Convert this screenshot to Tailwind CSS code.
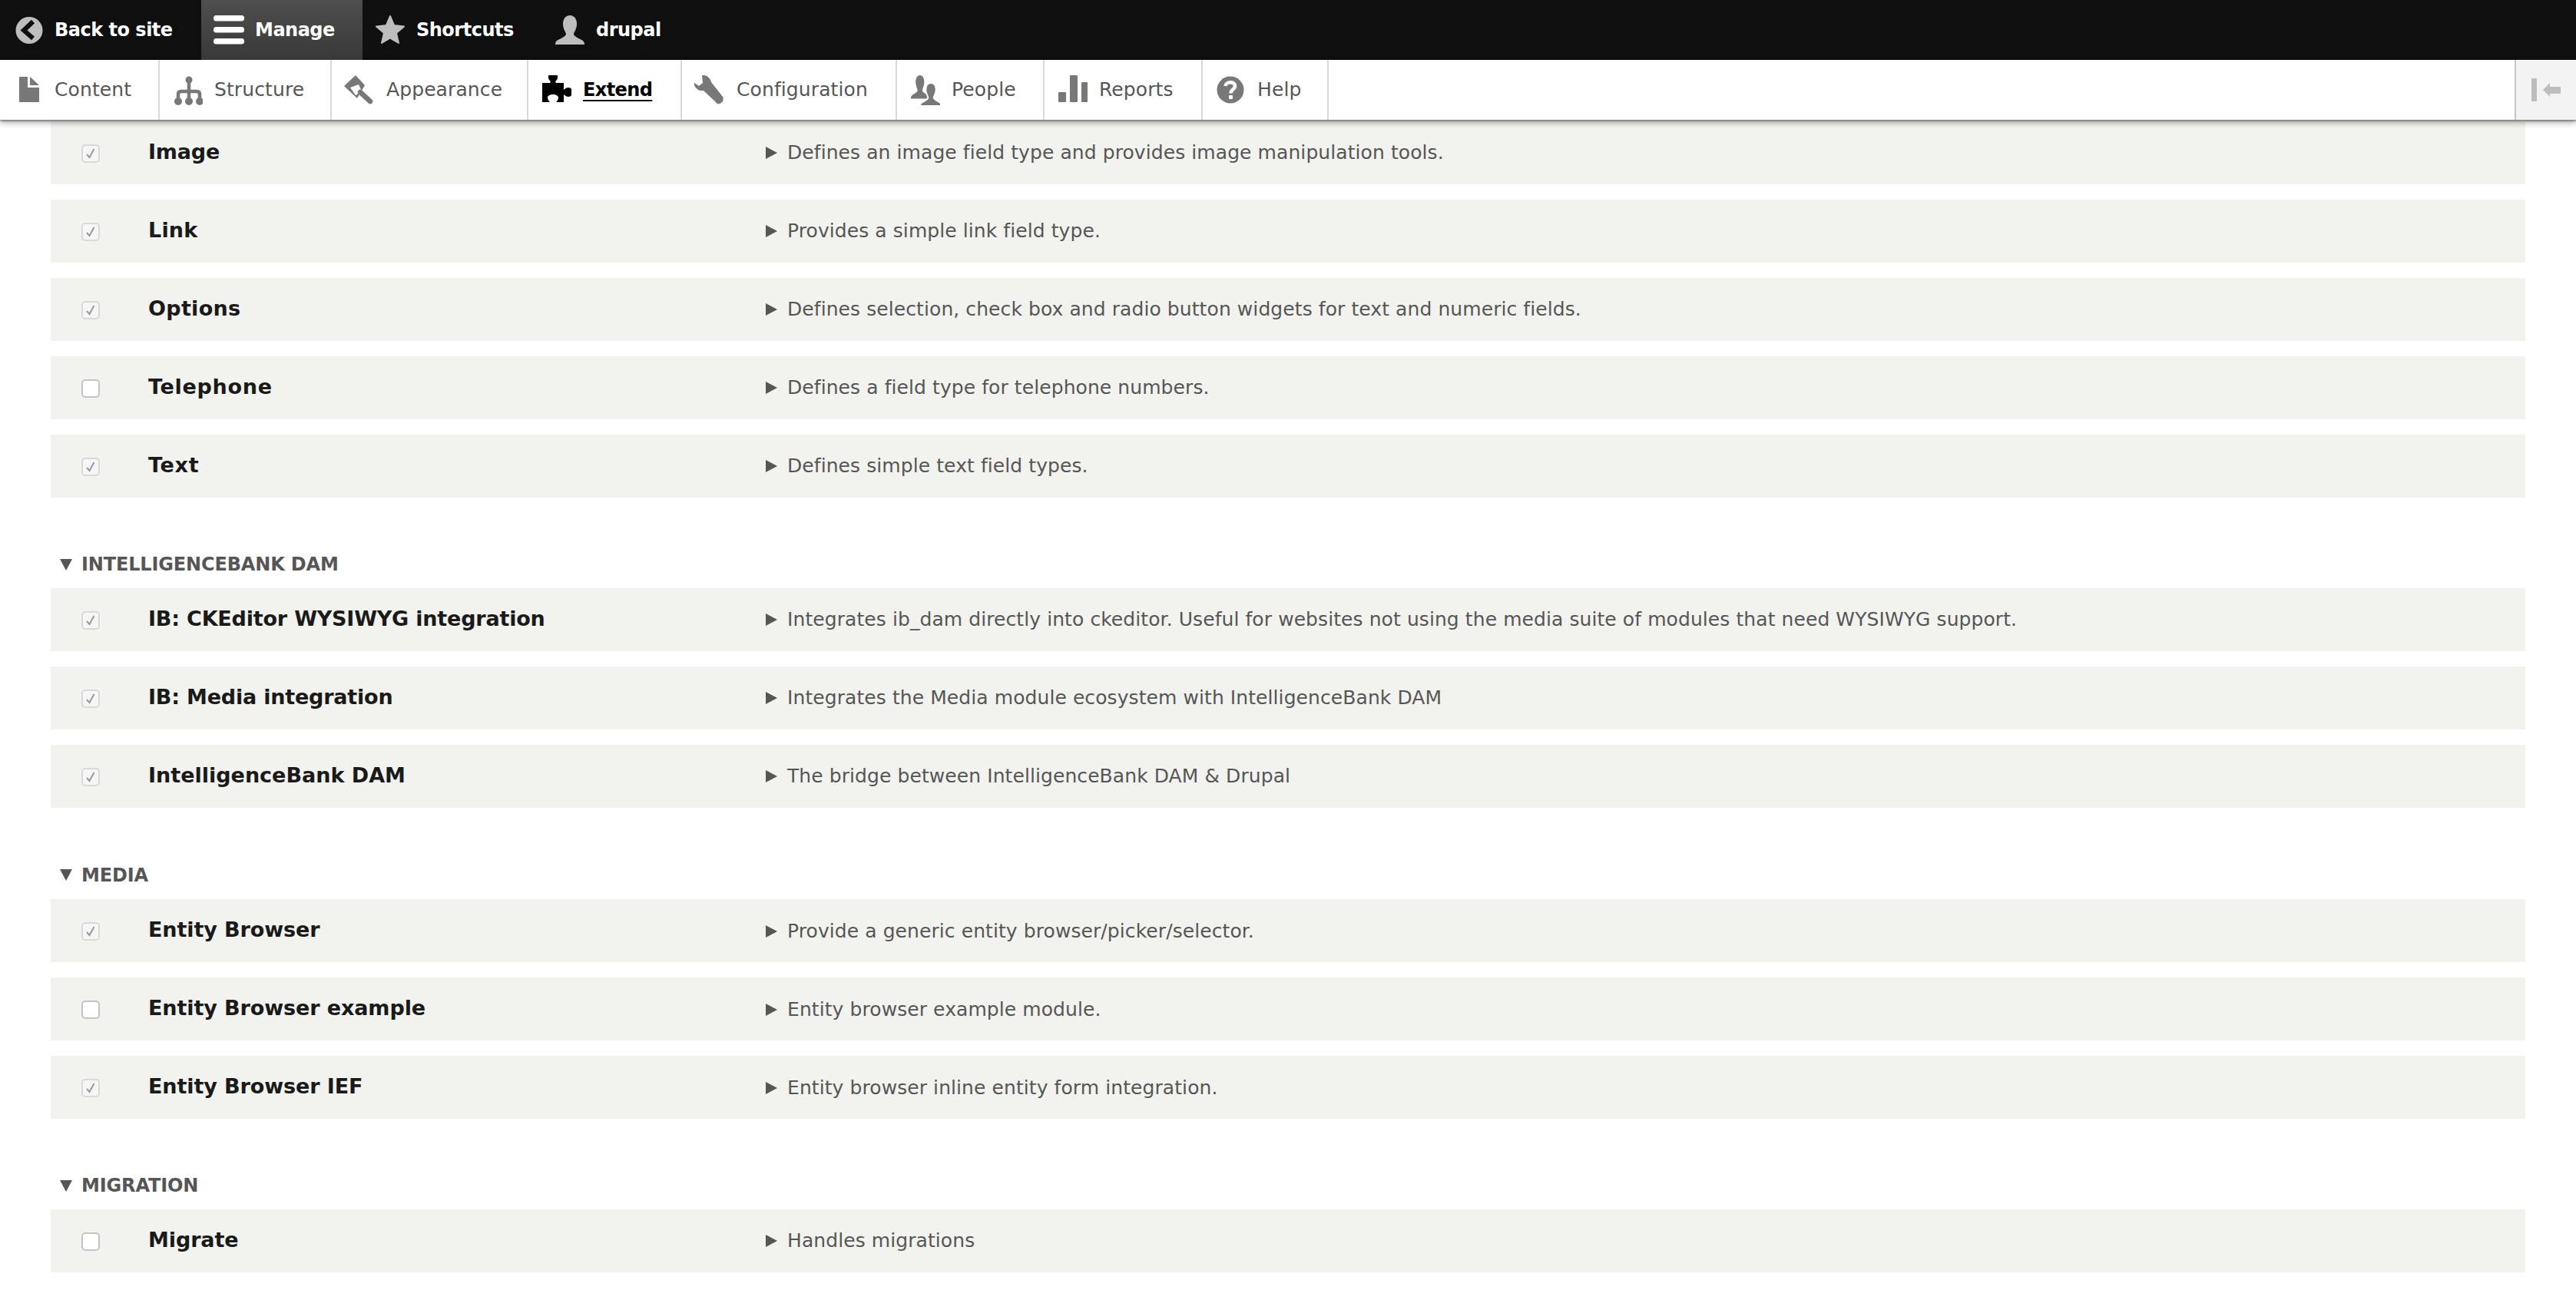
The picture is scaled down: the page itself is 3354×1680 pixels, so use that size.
<!DOCTYPE html>
<html><head><meta charset="utf-8"><script src="https://cdn.jsdelivr.net/npm/@tailwindcss/browser@4"></script></head>
<body class="bg-white w-[3354px] h-[1680px] overflow-hidden font-['DejaVu_Sans',sans-serif]">
<header class="relative z-10">
  <div class="h-[78px] bg-[#0f0f0f] flex text-white font-bold text-[24px] tracking-[-0.5px]">
    <a class="w-[262px] pl-4 flex items-center"><svg class="w-10 h-10 mr-[15px] shrink-0" viewBox="0 0 40 40"><circle cx="22" cy="20.5" r="17.5" fill="#bdbdbd"/><path d="M27 9 L15 20.5 L27 31" fill="none" stroke="#0f0f0f" stroke-width="6"/></svg>Back to site</a>
    <a class="w-[210px] pl-4 flex items-center bg-gradient-to-b from-[#4f4f4f] to-[#383838]"><svg class="w-10 h-10 mr-[14px] shrink-0" viewBox="0 0 40 40"><rect y="1" width="40" height="7.500" rx="3.500" fill="#fff"/><rect y="16" width="40" height="7.500" rx="3.500" fill="#fff"/><rect y="31" width="40" height="7.500" rx="3.500" fill="#fff"/></svg>Manage</a>
    <a class="w-[234px] pl-4 flex items-center"><svg class="w-10 h-10 mr-[14px] shrink-0" viewBox="0 0 40 40"><polygon points="20,2 25,14 38,15.500 28,24 31,37 20,30.500 9,37 12,24 2,15.500 15,14" fill="#bdbdbd" stroke="#bdbdbd" stroke-width="2" stroke-linejoin="round"/></svg>Shortcuts</a>
    <a class="pl-4 flex items-center"><svg class="w-10 h-10 mr-[14px] shrink-0 overflow-visible" viewBox="0 0 40 40"><path transform="translate(1 1)" d="M19 0C25 0 28 5 28 11C28 17 25 21 24 24C24 28 32 30 36 33C38 35 38 37 38 38L0 38C0 36 0 35 2 33C6 30 14 28 14 24C13 21 10 17 10 11C10 5 13 0 19 0Z" fill="#bdbdbd"/></svg>drupal</a>
  </div>
  <nav class="h-[78px] bg-white flex text-[#565656] text-[25px] tracking-[0.1px] shadow-[0_2px_2px_rgba(0,0,0,0.35),0_4px_8px_rgba(0,0,0,0.3)]">
    <a class="w-[208px] pl-4 flex items-center border-r-2 border-[#d9d9d9]"><svg class="w-10 h-10 mr-[15px] shrink-0" viewBox="0 0 40 40"><path d="M9 4Q9 3 10 3H20V17H35V35Q35 36 34 36H10Q9 36 9 35ZM23 3L35 14H23Z" fill="#787878"/></svg>Content</a>
    <a class="w-[224px] pl-4 flex items-center border-r-2 border-[#d9d9d9]"><svg class="w-10 h-10 mr-[15px] shrink-0" viewBox="0 0 40 40"><g fill="#787878"><circle cx="22" cy="7" r="4.500"/><circle cx="8" cy="35" r="5"/><circle cx="22" cy="35" r="5"/><circle cx="36" cy="35" r="5"/></g><path d="M22 7V35M8 35V26Q8 22 12 22H32Q36 22 36 26V35" fill="none" stroke="#787878" stroke-width="4.500"/></svg>Structure</a>
    <a class="w-[256px] pl-4 flex items-center border-r-2 border-[#d9d9d9]"><svg class="w-10 h-10 mr-[15px] shrink-0" viewBox="0 0 40 40"><path d="M15 1L0 15L17 31L27 14Z" fill="#787878"/><path d="M8 17L19 13L23 22L15 27Z" fill="#fff"/><path d="M21 23L34 35" stroke="#787878" stroke-width="6.500" stroke-linecap="round"/></svg>Appearance</a>
    <a class="w-[200px] pl-4 flex items-center border-r-2 border-[#d9d9d9] text-black text-[24px] tracking-[-0.6px] font-bold"><svg class="w-10 h-10 mr-[15px] shrink-0" viewBox="0 0 40 40"><path transform="translate(2 1)" d="M0 10H10L11 8C9 6 8 5 8 3V0H20V3C20 5 19 6 17 8L18 10H28V19C30 17 32 16 34 16C37 16 40 19 40 22C40 25 37 28 34 28C32 28 30 27 28 25V35H18C20 33 21 31 21 29C21 27 18 25 14 25C10 25 7 27 7 29C7 31 8 33 10 35H0Z"/></svg><span class="underline underline-offset-[5px] decoration-2">Extend</span></a>
    <a class="w-[280px] pl-4 flex items-center border-r-2 border-[#d9d9d9]"><svg class="w-10 h-10 mr-[15px] shrink-0" viewBox="0 0 40 40"><path transform="translate(-1 1)" d="M13 0C18 0 22 4 23 9L38 28C40 31 38 36 34 37C32 38 30 37 29 35L13 20C7 21 1 17 0 9L7 14L12 10L11 0Z" fill="#787878"/></svg>Configuration</a>
    <a class="w-[192px] pl-4 flex items-center border-r-2 border-[#d9d9d9]"><svg class="w-10 h-10 mr-[15px] shrink-0" viewBox="0 0 40 40"><path transform="translate(2 1) scale(.62 .8)" d="M19 0C25 0 28 5 28 11C28 17 25 21 24 24C24 28 32 30 36 33C38 35 38 37 38 38L0 38C0 36 0 35 2 33C6 30 14 28 14 24C13 21 10 17 10 11C10 5 13 0 19 0Z" fill="#787878"/><path transform="translate(14 11) scale(.74 .79)" d="M19 0C25 0 28 5 28 11C28 17 25 21 24 24C24 28 32 30 36 33C38 35 38 37 38 38L0 38C0 36 0 35 2 33C6 30 14 28 14 24C13 21 10 17 10 11C10 5 13 0 19 0Z" fill="#787878" stroke="#fff" stroke-width="2.500"/></svg>People</a>
    <a class="w-[206px] pl-4 flex items-center border-r-2 border-[#d9d9d9]"><svg class="w-10 h-10 mr-[15px] shrink-0" viewBox="0 0 40 40"><g fill="#787878"><rect x="2" y="23" width="10" height="13" rx="1"/><rect x="17" y="1" width="10" height="35" rx="1"/><rect x="32" y="10" width="10" height="26" rx="1"/></g></svg>Reports</a>
    <a class="w-[164px] pl-4 flex items-center border-r-2 border-[#d9d9d9]"><svg class="w-10 h-10 mr-[15px] shrink-0" viewBox="0 0 40 40"><circle cx="20" cy="20" r="17.500" fill="#787878"/><path d="M13.500 15C14 9 26 8.500 26 15C26 20 20.500 19 20.500 24.500" fill="none" stroke="#fff" stroke-width="4.500"/><rect x="18" y="27" width="5" height="5" rx="1" fill="#fff"/></svg>Help</a>
    <div class="flex-1"></div>
    <div class="w-20 bg-[#f3f3f3] border-l-2 border-[#c8c8c8] flex items-center pl-[20px]"><svg class="w-10 h-10" viewBox="0 0 40 40"><rect y="5" width="7" height="30" fill="#bdbdbd"/><path d="M15 20L24 11V16H38V25H24V29Z" fill="#bdbdbd"/></svg></div>
  </nav>
</header>
<main class="px-[66px] pt-[2px]">
  <section class="text-[25px] tracking-[0.08px]">
    <div class="h-[82px] mb-5 bg-[#f2f2ee] flex items-center"><span class="w-6 h-6 ml-[40px] mt-[2px] rounded-[5px] border-2 border-[#d9d9d9] bg-[#f6f6f6] flex items-center justify-center"><svg class="w-4 h-4" viewBox="0 0 16 16"><path d="M3 9L6.500 13L12.500 2" fill="none" stroke="#999" stroke-width="2"/></svg></span><b class="w-[804px] ml-[63px] mb-[2px] text-[27px] tracking-[-0.2px] text-[#1a1a1a]">Image</b><span class="flex items-center text-[#565656]"><i class="w-0 h-0 mr-[13px] border-y-[8px] border-y-transparent border-l-[15px] border-l-[#565656]"></i>Defines an image field type and provides image manipulation tools.</span></div>
    <div class="h-[82px] mb-5 bg-[#f2f2ee] flex items-center"><span class="w-6 h-6 ml-[40px] mt-[2px] rounded-[5px] border-2 border-[#d9d9d9] bg-[#f6f6f6] flex items-center justify-center"><svg class="w-4 h-4" viewBox="0 0 16 16"><path d="M3 9L6.500 13L12.500 2" fill="none" stroke="#999" stroke-width="2"/></svg></span><b class="w-[804px] ml-[63px] mb-[2px] text-[27px] tracking-[0.2px] text-[#1a1a1a]">Link</b><span class="flex items-center text-[#565656]"><i class="w-0 h-0 mr-[13px] border-y-[8px] border-y-transparent border-l-[15px] border-l-[#565656]"></i>Provides a simple link field type.</span></div>
    <div class="h-[82px] mb-5 bg-[#f2f2ee] flex items-center"><span class="w-6 h-6 ml-[40px] mt-[2px] rounded-[5px] border-2 border-[#d9d9d9] bg-[#f6f6f6] flex items-center justify-center"><svg class="w-4 h-4" viewBox="0 0 16 16"><path d="M3 9L6.500 13L12.500 2" fill="none" stroke="#999" stroke-width="2"/></svg></span><b class="w-[804px] ml-[63px] mb-[2px] text-[27px] tracking-[0.3px] text-[#1a1a1a]">Options</b><span class="flex items-center text-[#565656]"><i class="w-0 h-0 mr-[13px] border-y-[8px] border-y-transparent border-l-[15px] border-l-[#565656]"></i>Defines selection, check box and radio button widgets for text and numeric fields.</span></div>
    <div class="h-[82px] mb-5 bg-[#f2f2ee] flex items-center"><span class="w-6 h-6 ml-[40px] mt-[2px] rounded-[5px] border-2 border-[#c4c4c4] bg-white"></span><b class="w-[804px] ml-[63px] mb-[2px] text-[27px] tracking-[0.7px] text-[#1a1a1a]">Telephone</b><span class="flex items-center text-[#565656]"><i class="w-0 h-0 mr-[13px] border-y-[8px] border-y-transparent border-l-[15px] border-l-[#565656]"></i>Defines a field type for telephone numbers.</span></div>
    <div class="h-[82px] mb-5 bg-[#f2f2ee] flex items-center"><span class="w-6 h-6 ml-[40px] mt-[2px] rounded-[5px] border-2 border-[#d9d9d9] bg-[#f6f6f6] flex items-center justify-center"><svg class="w-4 h-4" viewBox="0 0 16 16"><path d="M3 9L6.500 13L12.500 2" fill="none" stroke="#999" stroke-width="2"/></svg></span><b class="w-[804px] ml-[63px] mb-[2px] text-[27px] tracking-[0.7px] text-[#1a1a1a]">Text</b><span class="flex items-center text-[#565656]"><i class="w-0 h-0 mr-[13px] border-y-[8px] border-y-transparent border-l-[15px] border-l-[#565656]"></i>Defines simple text field types.</span></div>
  </section>
  <section class="text-[25px] tracking-[0.08px]">
    <h3 class="h-[98px] pt-[36px] pl-[12px] flex items-center leading-[34px] text-[24px] tracking-[-0.15px] font-bold text-[#565656]"><i class="w-0 h-0 mr-[12px] border-x-[8px] border-x-transparent border-t-[15px] border-t-[#565656]"></i>INTELLIGENCEBANK DAM</h3>
    <div class="h-[82px] mb-5 bg-[#f2f2ee] flex items-center"><span class="w-6 h-6 ml-[40px] mt-[2px] rounded-[5px] border-2 border-[#d9d9d9] bg-[#f6f6f6] flex items-center justify-center"><svg class="w-4 h-4" viewBox="0 0 16 16"><path d="M3 9L6.500 13L12.500 2" fill="none" stroke="#999" stroke-width="2"/></svg></span><b class="w-[804px] ml-[63px] mb-[2px] text-[27px] tracking-[-0.2px] text-[#1a1a1a]">IB: CKEditor WYSIWYG integration</b><span class="flex items-center text-[#565656]"><i class="w-0 h-0 mr-[13px] border-y-[8px] border-y-transparent border-l-[15px] border-l-[#565656]"></i>Integrates ib_dam directly into ckeditor. Useful for websites not using the media suite of modules that need WYSIWYG support.</span></div>
    <div class="h-[82px] mb-5 bg-[#f2f2ee] flex items-center"><span class="w-6 h-6 ml-[40px] mt-[2px] rounded-[5px] border-2 border-[#d9d9d9] bg-[#f6f6f6] flex items-center justify-center"><svg class="w-4 h-4" viewBox="0 0 16 16"><path d="M3 9L6.500 13L12.500 2" fill="none" stroke="#999" stroke-width="2"/></svg></span><b class="w-[804px] ml-[63px] mb-[2px] text-[27px] tracking-[-0.2px] text-[#1a1a1a]">IB: Media integration</b><span class="flex items-center text-[#565656]"><i class="w-0 h-0 mr-[13px] border-y-[8px] border-y-transparent border-l-[15px] border-l-[#565656]"></i>Integrates the Media module ecosystem with IntelligenceBank DAM</span></div>
    <div class="h-[82px] mb-5 bg-[#f2f2ee] flex items-center"><span class="w-6 h-6 ml-[40px] mt-[2px] rounded-[5px] border-2 border-[#d9d9d9] bg-[#f6f6f6] flex items-center justify-center"><svg class="w-4 h-4" viewBox="0 0 16 16"><path d="M3 9L6.500 13L12.500 2" fill="none" stroke="#999" stroke-width="2"/></svg></span><b class="w-[804px] ml-[63px] mb-[2px] text-[27px] tracking-[0px] text-[#1a1a1a]">IntelligenceBank DAM</b><span class="flex items-center text-[#565656]"><i class="w-0 h-0 mr-[13px] border-y-[8px] border-y-transparent border-l-[15px] border-l-[#565656]"></i>The bridge between IntelligenceBank DAM &amp; Drupal</span></div>
  </section>
  <section class="text-[25px] tracking-[0.08px]">
    <h3 class="h-[99px] pt-[36px] pl-[12px] flex items-center leading-[34px] text-[24px] tracking-[-0.15px] font-bold text-[#565656]"><i class="w-0 h-0 mr-[12px] border-x-[8px] border-x-transparent border-t-[15px] border-t-[#565656]"></i>MEDIA</h3>
    <div class="h-[82px] mb-5 bg-[#f2f2ee] flex items-center"><span class="w-6 h-6 ml-[40px] mt-[2px] rounded-[5px] border-2 border-[#d9d9d9] bg-[#f6f6f6] flex items-center justify-center"><svg class="w-4 h-4" viewBox="0 0 16 16"><path d="M3 9L6.500 13L12.500 2" fill="none" stroke="#999" stroke-width="2"/></svg></span><b class="w-[804px] ml-[63px] mt-[1px] mb-[2px] text-[27px] tracking-[-0.1px] text-[#1a1a1a]">Entity Browser</b><span class="mt-[1px] flex items-center text-[#565656]"><i class="w-0 h-0 mr-[13px] border-y-[8px] border-y-transparent border-l-[15px] border-l-[#565656]"></i>Provide a generic entity browser/picker/selector.</span></div>
    <div class="h-[82px] mb-5 bg-[#f2f2ee] flex items-center"><span class="w-6 h-6 ml-[40px] mt-[2px] rounded-[5px] border-2 border-[#c4c4c4] bg-white"></span><b class="w-[804px] ml-[63px] mt-[1px] mb-[2px] text-[27px] tracking-[-0.1px] text-[#1a1a1a]">Entity Browser example</b><span class="mt-[1px] flex items-center text-[#565656]"><i class="w-0 h-0 mr-[13px] border-y-[8px] border-y-transparent border-l-[15px] border-l-[#565656]"></i>Entity browser example module.</span></div>
    <div class="h-[82px] mb-5 bg-[#f2f2ee] flex items-center"><span class="w-6 h-6 ml-[40px] mt-[2px] rounded-[5px] border-2 border-[#d9d9d9] bg-[#f6f6f6] flex items-center justify-center"><svg class="w-4 h-4" viewBox="0 0 16 16"><path d="M3 9L6.500 13L12.500 2" fill="none" stroke="#999" stroke-width="2"/></svg></span><b class="w-[804px] ml-[63px] mt-[1px] mb-[2px] text-[27px] tracking-[-0.1px] text-[#1a1a1a]">Entity Browser IEF</b><span class="mt-[1px] flex items-center text-[#565656]"><i class="w-0 h-0 mr-[13px] border-y-[8px] border-y-transparent border-l-[15px] border-l-[#565656]"></i>Entity browser inline entity form integration.</span></div>
  </section>
  <section class="text-[25px] tracking-[0.08px]">
    <h3 class="h-[98px] pt-[36px] pl-[12px] flex items-center leading-[34px] text-[24px] tracking-[-0.15px] font-bold text-[#565656]"><i class="w-0 h-0 mr-[12px] border-x-[8px] border-x-transparent border-t-[15px] border-t-[#565656]"></i>MIGRATION</h3>
    <div class="h-[82px] mb-5 bg-[#f2f2ee] flex items-center"><span class="w-6 h-6 ml-[40px] mt-[2px] rounded-[5px] border-2 border-[#c4c4c4] bg-white"></span><b class="w-[804px] ml-[63px] mb-[2px] text-[27px] tracking-[-0.1px] text-[#1a1a1a]">Migrate</b><span class="flex items-center text-[#565656]"><i class="w-0 h-0 mr-[13px] border-y-[8px] border-y-transparent border-l-[15px] border-l-[#565656]"></i>Handles migrations</span></div>
  </section>
</main>
</body></html>
